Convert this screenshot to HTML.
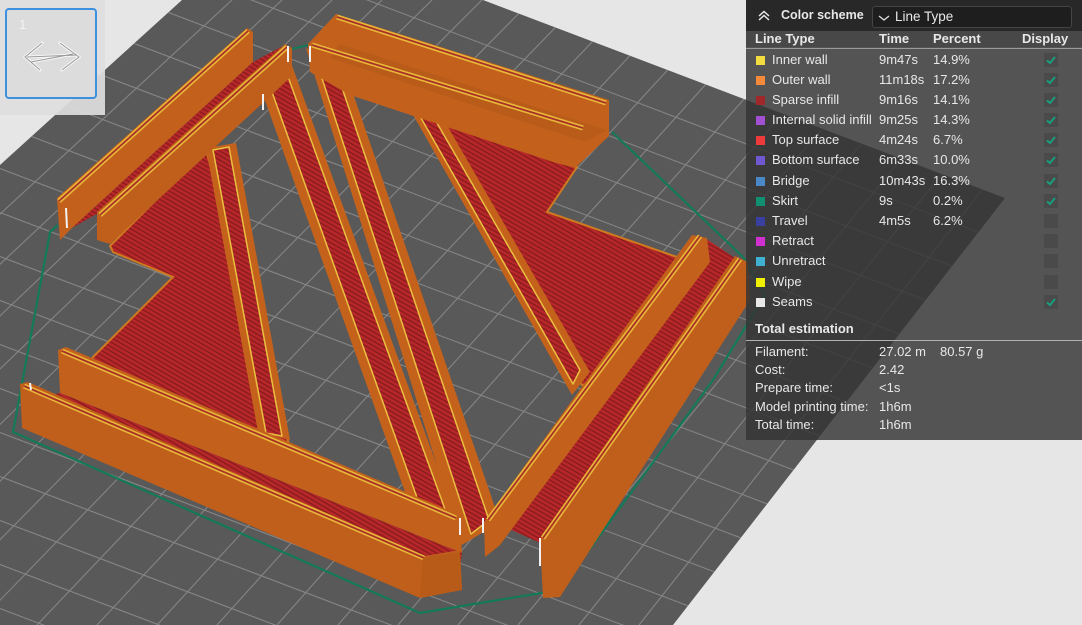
<!DOCTYPE html>
<html><head><meta charset="utf-8"><style>
html,body{margin:0;padding:0;width:1082px;height:625px;overflow:hidden;background:#e6e6e6;font-family:"Liberation Sans",sans-serif}
svg{position:absolute;left:0;top:0}
#thumbbg{position:absolute;left:0;top:0;width:105px;height:115px;background:rgba(222,222,222,0.93)}
#thumb{position:absolute;left:5px;top:8px;width:88px;height:87px;border:2px solid #3d8fe0;border-radius:4px;background:#dcdcdc;overflow:hidden}
#thumb span{position:absolute;left:12px;top:7px;color:#f4f4f4;font-size:13px}
#panel{position:absolute;left:746px;top:0;width:336px;height:440px;background:rgba(51,51,51,0.82);color:#e8e8e8;font-size:13px;overflow:hidden}
#panel .hd{position:absolute;left:0;top:0;width:336px;height:31px;background:rgba(38,38,38,0.95)}
#panel div.t{position:absolute;white-space:nowrap;line-height:16px}
.b{font-weight:bold}
.sq{position:absolute;width:9px;height:9px}
.cb{position:absolute;left:298px;width:14px;height:14px;background:#4a4a4a}
.cb svg{position:absolute;left:0;top:0}
</style></head><body>
<svg width="1082" height="625" viewBox="0 0 1082 625">
<defs>
<clipPath id="plate"><polygon points="0,165 182,0 483,0 1005,198 673,625 0,625"/></clipPath>
<pattern id="inf" width="4" height="4" patternUnits="userSpaceOnUse" patternTransform="rotate(30)">
<rect width="4" height="4" fill="#b8282a"/><rect width="4" height="1.6" fill="#8f1c1e"/></pattern>
</defs>
<polygon points="0,165 182,0 483,0 1005,198 673,625 0,625" fill="#595959"/>
<g clip-path="url(#plate)" stroke="#858585" stroke-width="1.1" fill="none">
<path d="M232,0L-445,625M282,0L-385,625M332,0L-325,625M382,0L-265,625M432,0L-204,625M482,0L-144,625M532,0L-84,625M582,0L-24,625M632,0L37,625M682,0L97,625M732,0L157,625M782,0L217,625M832,0L277,625M882,0L338,625M932,0L398,625M982,0L458,625M1032,0L518,625M1082,0L579,625M1132,0L639,625"/>
<path d="M0,-139.5L1082,271.5M0,-95.5L1082,315.5M0,-51.5L1082,359.5M0,-7.5L1082,403.5M0,36.5L1082,447.5M0,80.5L1082,491.5M0,124.5L1082,535.5M0,168.5L1082,579.5M0,212.5L1082,623.5M0,256.5L1082,667.5M0,300.5L1082,711.5M0,344.5L1082,755.5M0,388.5L1082,799.5M0,432.5L1082,843.5M0,476.5L1082,887.5M0,520.5L1082,931.5M0,564.5L1082,975.5M0,608.5L1082,1019.5"/>
</g>
<polyline points="612,132 743,257 765,295 713,380 560,590 480,603 420,613 13,432 50,232 58,225" fill="none" stroke="#127a58" stroke-width="2.2"/>
<polyline points="288,50 312,44" fill="none" stroke="#127a58" stroke-width="2"/>
<polygon points="110,246 206,150 290,448 90,364 93,357 173,277 113,252" fill="url(#inf)" stroke="#d07a20" stroke-width="2"/>
<polygon points="405,100 577,167 547,212 677,257 705,245 600,380 582,385" fill="url(#inf)" stroke="#d07a20" stroke-width="2"/>
<g stroke-linejoin="round">
<polygon points="206,148 236,143 290,440 258,432" fill="#c4621c"/>
<polygon points="213,150 229,147 282,436 266,433" fill="url(#inf)" stroke="#eac040" stroke-width="1.5"/>
<polygon points="262,92 290,60 456,518 410,506" fill="#c4621c"/>
<polygon points="272,92 287,74 446,512 420,506" fill="url(#inf)" stroke="#eac040" stroke-width="1.5"/>
<polygon points="306,48 345,70 500,522 462,545" fill="#c4621c"/>
<polygon points="316,60 338,76 489,520 471,534" fill="url(#inf)" stroke="#eac040" stroke-width="1.5"/>
<polygon points="403,97 437,108 590,372 572,395" fill="#c4621c"/>
<polygon points="413,104 430,111 580,370 573,384" fill="url(#inf)" stroke="#eac040" stroke-width="1.5"/>
</g>
<polygon points="58,350 66,347 460,515 462,553 60,393" fill="#c3611c"/>
<polygon points="60,393 462,553 458,580 22,400" fill="url(#inf)"/>
<polygon points="20,384 28,382 425,556 460,550 462,590 420,598 22,428" fill="#c05f1b"/>
<line x1="62" y1="351" x2="456" y2="518" stroke="#e8b838" stroke-width="5"/>
<line x1="62" y1="351" x2="456" y2="518" stroke="#a83028" stroke-width="1.8"/>
<line x1="24" y1="386" x2="424" y2="558" stroke="#e8b838" stroke-width="5"/>
<line x1="24" y1="386" x2="424" y2="558" stroke="#a83028" stroke-width="1.8"/>
<polygon points="423,558 460,552 462,590 420,597" fill="#b85a18"/>
<polygon points="57,198 247,28 253,32 253,62 72,228 60,240" fill="#c3611c"/>
<polygon points="72,228 253,62 283,46 100,212" fill="url(#inf)"/>
<polygon points="97,212 285,44 292,48 292,76 110,244 97,240" fill="#c05f1b"/>
<line x1="59" y1="201" x2="248" y2="31" stroke="#e8b838" stroke-width="5"/>
<line x1="59" y1="201" x2="248" y2="31" stroke="#a83028" stroke-width="1.8"/>
<line x1="100" y1="215" x2="287" y2="47" stroke="#e8b838" stroke-width="5"/>
<line x1="100" y1="215" x2="287" y2="47" stroke="#a83028" stroke-width="1.8"/>
<polygon points="308,44 336,14 609,100 609,136 575,168 553,162 350,95 310,72" fill="#c3611c"/>
<polygon points="340,44 607,130 585,142 330,58" fill="#b95c19"/>
<line x1="337" y1="17" x2="606" y2="103" stroke="#e8b838" stroke-width="5"/>
<line x1="337" y1="17" x2="606" y2="103" stroke="#a83028" stroke-width="1.8"/>
<line x1="312" y1="45" x2="583" y2="128" stroke="#e8b838" stroke-width="5"/>
<line x1="312" y1="45" x2="583" y2="128" stroke="#a83028" stroke-width="1.8"/>
<polygon points="708,240 735,258 545,545 500,525" fill="url(#inf)"/>
<polygon points="692,235 707,238 710,262 500,545 485,557 484,522" fill="#c3611c"/>
<polygon points="735,256 748,262 750,300 560,597 543,598 540,540" fill="#c05f1b"/>
<line x1="700" y1="236" x2="488" y2="520" stroke="#e8b838" stroke-width="5"/>
<line x1="700" y1="236" x2="488" y2="520" stroke="#a83028" stroke-width="1.8"/>
<line x1="740" y1="259" x2="543" y2="538" stroke="#e8b838" stroke-width="5"/>
<line x1="740" y1="259" x2="543" y2="538" stroke="#a83028" stroke-width="1.8"/>
<g stroke="#f2f2f2" stroke-width="2">
<line x1="66" y1="208" x2="67" y2="228"/><line x1="288" y1="46" x2="288" y2="62"/><line x1="310" y1="46" x2="310" y2="62"/>
<line x1="263" y1="94" x2="263" y2="110"/><line x1="460" y1="518" x2="460" y2="535"/><line x1="483" y1="518" x2="483" y2="533"/>
<line x1="540" y1="538" x2="540" y2="566"/><line x1="30" y1="383" x2="31" y2="390"/>
</g>
</svg>
<div id="thumbbg"></div>
<div id="thumb"><span>1</span>
<svg width="88" height="87" viewBox="0 0 88 87">
<g fill="none" stroke="#f6f6f6" stroke-width="3" stroke-linecap="round">
<path d="M35,33 L18,47 L33,60 M53,33 L72,47 L55,60 M20,47 L70,45 M24,52 L66,44"/>
</g>
<g fill="none" stroke="#9a9a9a" stroke-width="1">
<path d="M35,33 L18,47 L33,60 M53,33 L72,47 L55,60 M20,47 L70,45 M24,52 L66,44"/>
</g>
</svg></div>
<div id="panel">
<div class="hd"></div>
<svg width="20" height="20" viewBox="0 0 20 20" style="left:9px;top:6px"><path d="M4,10 L9,5.5 L14,10 M4,14 L9,9.5 L14,14" fill="none" stroke="#e8e8e8" stroke-width="1.5"/></svg>
<div class="t b" style="left:35px;top:7px;font-size:12.5px">Color scheme</div>
<div style="position:absolute;left:126px;top:6px;width:198px;height:20px;background:#1e1e1e;border:1px solid #454545;border-radius:3px"></div>
<svg width="12" height="10" viewBox="0 0 12 10" style="left:132px;top:13px"><path d="M1,3 L6,7 L11,3" fill="none" stroke="#ddd" stroke-width="1.3"/></svg>
<div class="t" style="left:149px;top:9px;font-size:13.5px">Line Type</div>
<div style="position:absolute;left:0;top:31px;width:336px;height:16px;background:rgba(60,60,60,0.5)"></div>
<div class="t b" style="left:9px;top:31px">Line Type</div>
<div class="t b" style="left:133px;top:31px">Time</div>
<div class="t b" style="left:187px;top:31px">Percent</div>
<div class="t b" style="left:276px;top:31px">Display</div>
<div style="position:absolute;left:0;top:48px;width:336px;height:1px;background:#9a9a9a"></div>

<div class="sq" style="left:10px;top:56px;background:#f2dc40"></div><div class="t" style="left:26px;top:52px">Inner wall</div><div class="t" style="left:133px;top:52px">9m47s</div><div class="t" style="left:187px;top:52px">14.9%</div>
<div class="sq" style="left:10px;top:76px;background:#f58a3a"></div><div class="t" style="left:26px;top:72px">Outer wall</div><div class="t" style="left:133px;top:72px">11m18s</div><div class="t" style="left:187px;top:72px">17.2%</div>
<div class="sq" style="left:10px;top:96px;background:#a02828"></div><div class="t" style="left:26px;top:92px">Sparse infill</div><div class="t" style="left:133px;top:92px">9m16s</div><div class="t" style="left:187px;top:92px">14.1%</div>
<div class="sq" style="left:10px;top:116px;background:#a050d0"></div><div class="t" style="left:26px;top:112px">Internal solid infill</div><div class="t" style="left:133px;top:112px">9m25s</div><div class="t" style="left:187px;top:112px">14.3%</div>
<div class="sq" style="left:10px;top:136px;background:#ee3a3a"></div><div class="t" style="left:26px;top:132px">Top surface</div><div class="t" style="left:133px;top:132px">4m24s</div><div class="t" style="left:187px;top:132px">6.7%</div>
<div class="sq" style="left:10px;top:156px;background:#7058d0"></div><div class="t" style="left:26px;top:152px">Bottom surface</div><div class="t" style="left:133px;top:152px">6m33s</div><div class="t" style="left:187px;top:152px">10.0%</div>
<div class="sq" style="left:10px;top:177px;background:#4a88c8"></div><div class="t" style="left:26px;top:173px">Bridge</div><div class="t" style="left:133px;top:173px">10m43s</div><div class="t" style="left:187px;top:173px">16.3%</div>
<div class="sq" style="left:10px;top:197px;background:#109070"></div><div class="t" style="left:26px;top:193px">Skirt</div><div class="t" style="left:133px;top:193px">9s</div><div class="t" style="left:187px;top:193px">0.2%</div>
<div class="sq" style="left:10px;top:217px;background:#3a40a0"></div><div class="t" style="left:26px;top:213px">Travel</div><div class="t" style="left:133px;top:213px">4m5s</div><div class="t" style="left:187px;top:213px">6.2%</div>
<div class="sq" style="left:10px;top:237px;background:#d030d0"></div><div class="t" style="left:26px;top:233px">Retract</div>
<div class="sq" style="left:10px;top:257px;background:#40b0d0"></div><div class="t" style="left:26px;top:253px">Unretract</div>
<div class="sq" style="left:10px;top:278px;background:#f0f000"></div><div class="t" style="left:26px;top:274px">Wipe</div>
<div class="sq" style="left:10px;top:298px;background:#e8e8e8"></div><div class="t" style="left:26px;top:294px">Seams</div>

<div class="cb" style="top:53px"><svg width="14" height="14"><path d="M3,7.5 L6,10 L11,4" fill="none" stroke="#16a080" stroke-width="2"/></svg></div>
<div class="cb" style="top:73px"><svg width="14" height="14"><path d="M3,7.5 L6,10 L11,4" fill="none" stroke="#16a080" stroke-width="2"/></svg></div>
<div class="cb" style="top:93px"><svg width="14" height="14"><path d="M3,7.5 L6,10 L11,4" fill="none" stroke="#16a080" stroke-width="2"/></svg></div>
<div class="cb" style="top:113px"><svg width="14" height="14"><path d="M3,7.5 L6,10 L11,4" fill="none" stroke="#16a080" stroke-width="2"/></svg></div>
<div class="cb" style="top:133px"><svg width="14" height="14"><path d="M3,7.5 L6,10 L11,4" fill="none" stroke="#16a080" stroke-width="2"/></svg></div>
<div class="cb" style="top:153px"><svg width="14" height="14"><path d="M3,7.5 L6,10 L11,4" fill="none" stroke="#16a080" stroke-width="2"/></svg></div>
<div class="cb" style="top:174px"><svg width="14" height="14"><path d="M3,7.5 L6,10 L11,4" fill="none" stroke="#16a080" stroke-width="2"/></svg></div>
<div class="cb" style="top:194px"><svg width="14" height="14"><path d="M3,7.5 L6,10 L11,4" fill="none" stroke="#16a080" stroke-width="2"/></svg></div>
<div class="cb" style="top:214px"></div>
<div class="cb" style="top:234px"></div>
<div class="cb" style="top:254px"></div>
<div class="cb" style="top:275px"></div>
<div class="cb" style="top:295px"><svg width="14" height="14"><path d="M3,7.5 L6,10 L11,4" fill="none" stroke="#16a080" stroke-width="2"/></svg></div>

<div class="t b" style="left:9px;top:321px">Total estimation</div>
<div style="position:absolute;left:0;top:340px;width:336px;height:1px;background:#b0b0b0"></div>
<div class="t" style="left:9px;top:344px">Filament:</div><div class="t" style="left:133px;top:344px">27.02 m</div><div class="t" style="left:194px;top:344px">80.57 g</div>
<div class="t" style="left:9px;top:362px">Cost:</div><div class="t" style="left:133px;top:362px">2.42</div>
<div class="t" style="left:9px;top:380px">Prepare time:</div><div class="t" style="left:133px;top:380px">&lt;1s</div>
<div class="t" style="left:9px;top:399px">Model printing time:</div><div class="t" style="left:133px;top:399px">1h6m</div>
<div class="t" style="left:9px;top:417px">Total time:</div><div class="t" style="left:133px;top:417px">1h6m</div>
</div>
</body></html>
